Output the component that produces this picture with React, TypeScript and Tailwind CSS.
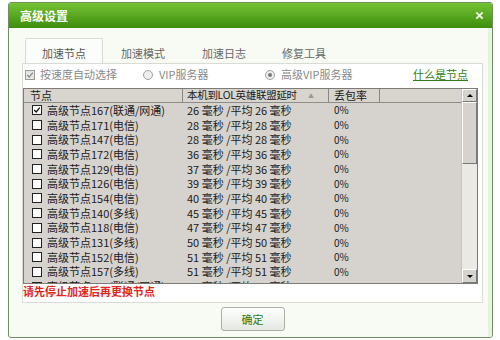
import React from 'react';

type Node = { id: number; isp: string; ping: number; avg: number; checked?: boolean };

const nodes: Node[] = [
	{ id: 167, isp: '联通/网通', ping: 26, avg: 26, checked: true },
	{ id: 171, isp: '电信', ping: 28, avg: 28 },
	{ id: 147, isp: '电信', ping: 28, avg: 28 },
	{ id: 172, isp: '电信', ping: 36, avg: 36 },
	{ id: 129, isp: '电信', ping: 37, avg: 36 },
	{ id: 126, isp: '电信', ping: 39, avg: 39 },
	{ id: 154, isp: '电信', ping: 40, avg: 40 },
	{ id: 140, isp: '多线', ping: 45, avg: 45 },
	{ id: 118, isp: '电信', ping: 47, avg: 47 },
	{ id: 131, isp: '多线', ping: 50, avg: 50 },
	{ id: 152, isp: '电信', ping: 51, avg: 51 },
	{ id: 157, isp: '多线', ping: 51, avg: 51 },
	{ id: 163, isp: '联通/网通', ping: 51, avg: 51 },
];

const font = { fontFamily: '"SimSun", "Noto Sans CJK SC", sans-serif' };

function Check({ checked, muted }: { checked?: boolean; muted?: boolean }) {
	return (
		<span
			className={`flex h-[10px] w-[10px] shrink-0 items-center justify-center border ${
				muted ? 'border-[#9a9a9a] bg-[#e6e6e6]' : 'border-[#222] bg-white'
			}`}
		>
			{checked && (
				<svg viewBox="0 0 10 10" className="h-[8px] w-[8px]">
					<path
						d="M1.5 5 L4 7.5 L8.5 2"
						fill="none"
						stroke={muted ? '#8a8a8a' : '#111'}
						strokeWidth="1.6"
					/>
				</svg>
			)}
		</span>
	);
}

function Radio({ checked }: { checked?: boolean }) {
	return (
		<span className="flex h-[10px] w-[10px] shrink-0 items-center justify-center rounded-full border border-[#a0a0a0] bg-[#eeeeee]">
			{checked && <span className="h-[4px] w-[4px] rounded-full bg-[#777]" />}
		</span>
	);
}

function Row({ n }: { n: Node }) {
	return (
		<div className="flex h-[14.7px] shrink-0 items-center whitespace-nowrap text-[11px] leading-none text-[#1a1a1a]">
			<div className="flex w-[159px] items-center gap-[5px] pl-[8px]">
				<Check checked={n.checked} />
				<span>
					高级节点{n.id}({n.isp})
				</span>
			</div>
			<div className="w-[146px] whitespace-pre pl-[4px]">
				{`${n.ping} 毫秒 /平均 ${n.avg} 毫秒`}
			</div>
			<div className="pl-[5px] text-[10px]">0%</div>
		</div>
	);
}

function Scrollbar() {
	return (
		<div className="flex w-[16px] shrink-0 flex-col border-l border-[#c8c5bf] bg-[#ebe9e4]">
			<div className="flex h-[13px] items-center justify-center border border-t-white border-l-white border-r-[#777] border-b-[#777] bg-[#d6d3ce]">
				<span className="border-x-[3px] border-b-[3px] border-x-transparent border-b-black" />
			</div>
			<div className="h-[62px] border border-t-white border-l-white border-r-[#777] border-b-[#777] bg-[#d6d3ce]" />
			<div className="flex-1" />
			<div className="flex h-[14px] items-center justify-center border border-t-white border-l-white border-r-[#777] border-b-[#777] bg-[#d6d3ce]">
				<span className="border-x-[3px] border-t-[3px] border-x-transparent border-t-black" />
			</div>
		</div>
	);
}

export default function App() {
	return (
		<div className="h-[340px] w-[500px] bg-white pl-[8px] pt-[2px] leading-none" style={font}>
			<div className="flex h-[336px] w-[485px] flex-col overflow-hidden rounded-[3px] border border-[#6f8f60] bg-[#f7fbf4]">
				<div className="flex h-[25px] shrink-0 items-center justify-between bg-gradient-to-b from-[#74c232] to-[#3d8e0c] pl-[11px] pr-[8px]">
					<span className="text-[12px] font-bold text-white">高级设置</span>
					<svg viewBox="0 0 10 10" className="h-[9px] w-[9px]">
						<path d="M1.5 1.5 L8.5 8.5 M8.5 1.5 L1.5 8.5" stroke="#eef8e0" strokeWidth="2.2" />
					</svg>
				</div>

				<div className="flex flex-1 flex-col border-r-[4px] border-[#e6f3e0] pl-[13px] pr-[5px] pt-[10px]">
					<div className="flex h-[25px] items-stretch pl-[3px] text-[11px] text-[#666]">
						<div className="flex w-[78px] items-center justify-center rounded-t-[2px] border border-b-0 border-[#d8dcd4] bg-[#fbfdfa] pt-[5px] text-[#555]">
							加速节点
						</div>
						<div className="flex w-[80px] items-center justify-center pt-[5px]">加速模式</div>
						<div className="flex w-[82px] items-center justify-center pt-[5px]">加速日志</div>
						<div className="flex w-[78px] items-center justify-center pt-[5px]">修复工具</div>
					</div>

					<div className="flex h-[240px] flex-col border border-[#d8dcd4] bg-white">
						<div className="flex h-[24px] shrink-0 items-center whitespace-nowrap pb-[3px] text-[11px] text-[#8a8a8a]">
							<div className="flex w-[120px] items-center gap-[5px] pl-[2px]">
								<Check checked muted />
								<span>按速度自动选择</span>
							</div>
							<div className="flex w-[122px] items-center gap-[6px]">
								<Radio />
								<span>VIP服务器</span>
							</div>
							<div className="flex w-[148px] items-center gap-[6px]">
								<Radio checked />
								<span>高级VIP服务器</span>
							</div>
							<a className="text-[11px] text-[#2f7d12] underline">什么是节点</a>
						</div>

						<div className="mr-[4px] flex h-[196px] shrink-0 border border-[#7d7b76] bg-[#d6d3ce]">
							<div className="flex flex-1 flex-col overflow-hidden">
								<div className="flex h-[14px] shrink-0 items-center whitespace-nowrap border-b border-[#8e8c87] bg-[#d8d5cf] text-[11px] leading-none text-[#1a1a1a]">
									<div className="flex h-full w-[159px] items-center border-r border-[#888] pl-[6px]">节点</div>
									<div className="flex h-full w-[146px] items-center justify-between overflow-hidden border-r border-[#888] pl-[4px] pr-[14px]">
										<span className="text-[10.5px] tracking-[-0.3px]">本机到LOL英雄联盟延时</span>
										<span className="text-[6px] text-[#999]">▲</span>
									</div>
									<div className="flex h-full w-[51px] items-center border-r border-[#888] pl-[5px]">丢包率</div>
								</div>
								{nodes.map((n) => (
									<Row key={n.id} n={n} />
								))}
							</div>
							<Scrollbar />
						</div>

						<div className="flex h-[18px] shrink-0 items-center whitespace-nowrap pb-[4px] text-[11px] font-bold text-[#e0251c]">
							请先停止加速后再更换节点
						</div>
					</div>

					<div className="flex flex-1 items-center justify-center pb-[2px]">
						<button className="h-[24px] w-[64px] rounded-[3px] border border-[#a9b1a4] bg-gradient-to-b from-white to-[#e4e8e1] text-[11px] text-[#2b7a18]">
							确定
						</button>
					</div>
				</div>
			</div>
		</div>
	);
}
